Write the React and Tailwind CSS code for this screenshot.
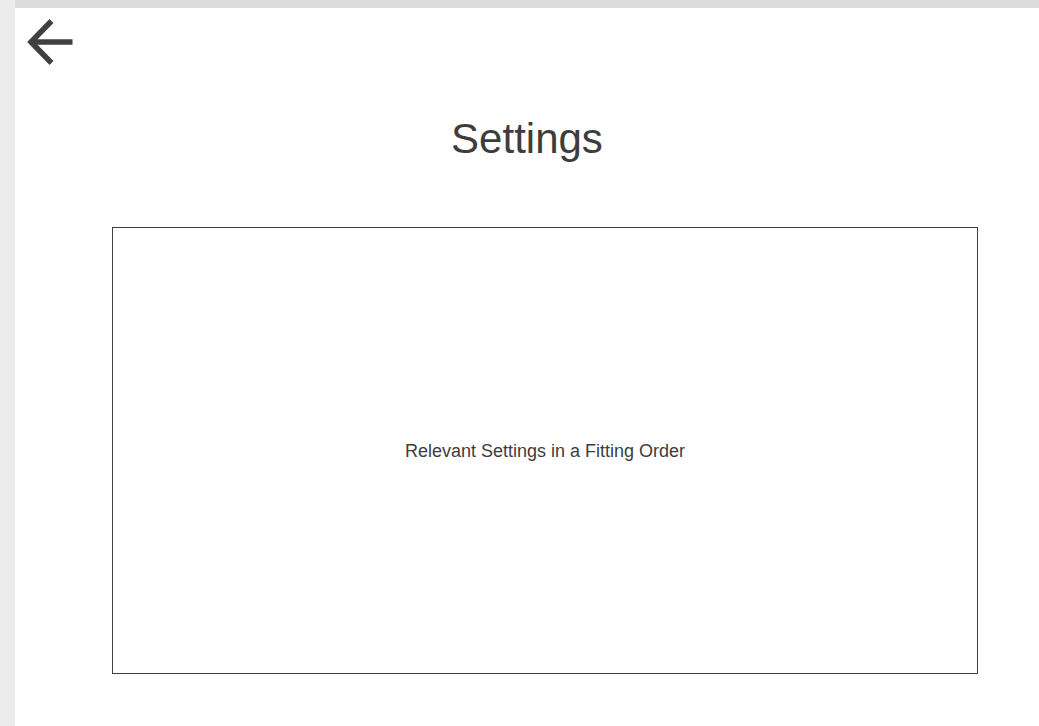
export default function App() {
  return (
    <div className="flex h-[726px] w-[1039px] overflow-hidden bg-white" style={{ fontFamily: '"Liberation Sans", Arial, sans-serif' }}>
      <div className="w-[15px] shrink-0 bg-[#ececec]" />
      <div className="flex flex-1 flex-col">
        <div className="h-[8px] shrink-0 bg-[#dcdcdc]" />
        <div className="flex flex-col">
          <div className="pl-[10px] pt-[8px]">
            <svg width="50" height="50" viewBox="0 0 50 50" fill="none" stroke="#404040" strokeWidth="5.5" strokeLinecap="butt" strokeLinejoin="miter">
              <path d="M6 26 H47.5" />
              <path d="M26.5 5 L6 26 L26.5 47" />
            </svg>
          </div>
          <h1 className="mt-[49px] text-center text-[42px] leading-[48px] font-normal text-[#3d3d3d]">Settings</h1>
          <div className="ml-[97px] mt-[64px] flex h-[447px] w-[866px] items-center justify-center border border-[#404040]">
            <span className="text-[18px] leading-[22px] text-[#3d3d3d]">Relevant Settings in a Fitting Order</span>
          </div>
        </div>
      </div>
    </div>
  );
}
